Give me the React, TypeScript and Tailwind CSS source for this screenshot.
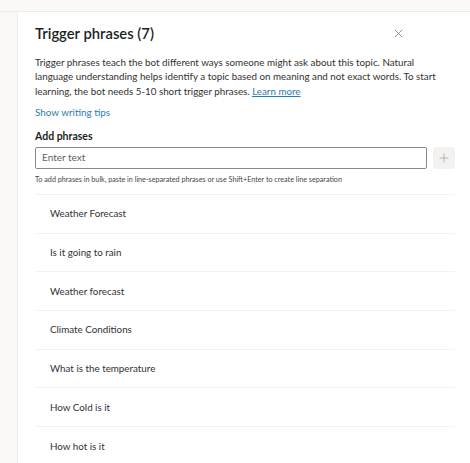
import { X, Plus } from "lucide-react";

const phrases = [
  "Weather Forecast",
  "Is it going to rain",
  "Weather forecast",
  "Climate Conditions",
  "What is the temperature",
  "How Cold is it",
  "How hot is it",
];

const App = () => {
  return (
    <div
      className="w-[470px] h-[463px] overflow-hidden bg-[#faf9f8] flex flex-col text-[#323130]"
      style={{ fontFamily: 'Lato, "Open Sans", sans-serif' }}
    >
      {/* Top band */}
      <div className="h-[12px] shrink-0 border-b border-[#edebe9]" />

      <div className="flex flex-1 min-h-0">
        {/* Left rail */}
        <div className="w-[18px] shrink-0 border-r border-[#edebe9]" />

        {/* Panel */}
        <div className="flex-1 bg-white pl-[17px] pr-[15px] pt-[12px]">
          <div className="flex items-center justify-between h-[18px]">
            <h2 className="text-[14.8px] font-semibold text-[#201f1e]">Trigger phrases (7)</h2>
            <X className="w-[13px] h-[13px] text-[#605e5c] mr-[50px]" strokeWidth={1.25} />
          </div>

          <p className="mt-[13px] text-[9.8px] leading-[14.3px] text-[#323130] pr-[4px]">
            Trigger phrases teach the bot different ways someone might ask about this topic. Natural language understanding helps identify a topic based on meaning and not exact words. To start learning, the bot needs 5-10 short trigger phrases.{" "}
            <a className="text-[#2b7bb0] underline">Learn more</a>
          </p>

          <div className="mt-[7px] text-[9.9px] text-[#2b7bb0] leading-[14px]">Show writing tips</div>

          <div className="mt-[10px] text-[10.5px] font-bold text-[#201f1e] leading-[14px]">Add phrases</div>

          <div className="mt-[4px] flex items-center gap-[6px]">
            <div className="flex-1 h-[22px] border border-[#8a8886] rounded-[2px] flex items-center px-[6px]">
              <span className="text-[10px] text-[#605e5c]">Enter text</span>
            </div>
            <div className="w-[22px] h-[22px] bg-[#f3f2f1] rounded-[2px] flex items-center justify-center">
              <Plus className="w-[14px] h-[14px] text-[#a19f9d]" strokeWidth={1.25} />
            </div>
          </div>

          <div className="mt-[6px] text-[7.2px] text-[#484644] leading-[9px]">
            To add phrases in bulk, paste in line-separated phrases or use Shift+Enter to create line separation
          </div>

          <ul className="mt-[10px]">
            {phrases.map((p) => (
              <li
                key={p}
                className="h-[38.7px] border-t border-[#f3f2f1] flex items-center pl-[15px] text-[9.8px] text-[#323130]"
              >
                {p}
              </li>
            ))}
          </ul>
        </div>
      </div>
    </div>
  );
};

export default App;
